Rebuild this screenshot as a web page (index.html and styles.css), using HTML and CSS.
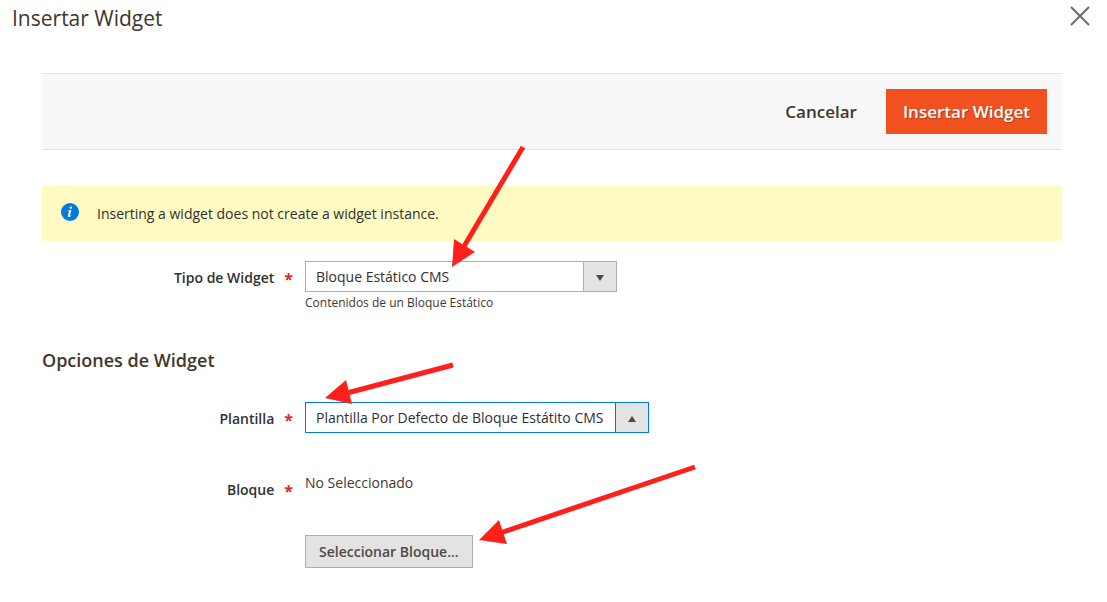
FILE: index.html
```html
<!DOCTYPE html>
<html lang="es">
<head>
<meta charset="utf-8">
<meta name="viewport" content="width=device-width, initial-scale=1">
<title>Insertar Widget</title>
<link rel="stylesheet" href="styles.css">
</head>
<body>
<main class="modal">
  <header class="modal-header">
    <h1 class="modal-title">Insertar Widget</h1>
    <button class="close" type="button" aria-label="Cerrar">
      <svg class="close-icon" viewBox="0 0 20 20" aria-hidden="true"><path d="M1 1 19 19M19 1 1 19"/></svg>
    </button>
  </header>
  <form class="modal-content">
    <div class="toolbar">
      <button class="action" type="button">Cancelar</button>
      <button class="action action-primary" type="button">Insertar Widget</button>
    </div>
    <div class="notice">
      <svg class="notice-icon" viewBox="0 0 18 18" aria-hidden="true">
        <circle cx="9" cy="9" r="9"/>
        <path d="M9 3.8a1.15 1.15 0 1 0 1.6 0 1.15 1.15 0 0 0-1.6 0zM6.9 7.4 10.4 7 9 12.3q-.1.7.8-.1l.5.4q-1.2 1.6-2.6 1.5-1.1-.2-.8-1.6L8 8.3l-1.2-.2z"/>
      </svg>
      <p class="notice-text">Inserting a widget does not create a widget instance.</p>
    </div>
    <div class="field">
      <label class="label" for="type">Tipo de Widget <span class="required">*</span></label>
      <div class="control">
        <div class="select-wrap">
          <select class="select select-type" id="type"><option>Bloque Estático CMS</option></select>
          <svg class="caret" viewBox="0 0 8 6" aria-hidden="true"><path d="M0 0h8L4 6z"/></svg>
        </div>
        <p class="note">Contenidos de un Bloque Estático</p>
      </div>
    </div>
    <h2 class="section-title">Opciones de Widget</h2>
    <div class="field">
      <label class="label" for="template">Plantilla <span class="required">*</span></label>
      <div class="control">
        <div class="select-wrap">
          <select class="select select-template" id="template"><option>Plantilla Por Defecto de Bloque Estátito CMS</option></select>
          <svg class="caret" viewBox="0 0 8 6" aria-hidden="true"><path d="M0 6h8L4 0z"/></svg>
        </div>
      </div>
    </div>
    <div class="field field-block">
      <label class="label" for="chooser">Bloque <span class="required">*</span></label>
      <div class="control">
        <p class="value">No Seleccionado</p>
        <button class="chooser" id="chooser" type="button">Seleccionar Bloque...</button>
      </div>
    </div>
  </form>
  <svg class="arrows" width="1107" height="602" viewBox="0 0 1107 602" aria-hidden="true">
    <path class="shaft" d="M523 147 463 248M453 365 347 393M695 467 500 533"/>
    <path class="head" d="M452 267 454 239 475 252zM325 398 346 380 352 404zM479 540 499 520 507 544z"/>
  </svg>
</main>
</body>
</html>
```
FILE: styles.css
```css
* {
  box-sizing: border-box;
}

body {
  margin: 0;
  background: #fff;
  color: #303030;
  font: 14px/20px "Open Sans", "Noto Sans", sans-serif;
}

h1, h2, p {
  margin: 0;
}

button, select {
  font: inherit;
  border-radius: 0;
}

.modal {
  position: relative;
}

.modal-header {
  display: flex;
  justify-content: space-between;
  align-items: flex-start;
  padding: 4px 17px 0 12px;
}

.modal-title {
  color: #41362f;
  font-size: 21px;
  font-weight: 400;
  line-height: 28px;
}

.close {
  display: flex;
  padding: 2px 0;
  border: 0;
  background: none;
}

.close-icon {
  width: 20px;
  height: 20px;
  fill: none;
  stroke: #736963;
  stroke-width: 2;
}

.modal-content {
  padding: 41px 45px 32px 42px;
}

.toolbar {
  display: flex;
  justify-content: flex-end;
  gap: 12px;
  padding: 15px;
  border: solid #e3e3e3;
  border-width: 1px 0;
  background: #f8f8f8;
}

.action {
  padding: 11px 17px;
  border: 0;
  background: none;
  color: #41362f;
  font-size: 17px;
  font-weight: 600;
  line-height: 23px;
}

.action-primary {
  background: #f1501f;
  color: #fff;
  text-shadow: 1px 1px 0 rgba(0, 0, 0, 0.25);
}

.notice {
  display: flex;
  gap: 18px;
  margin: 36px 0 20px;
  padding: 17px 19px;
  background: #fffac2;
}

.notice-icon {
  width: 18px;
  height: 18px;
  fill: #007bdb;
}

.notice-icon path {
  fill: #fff;
}

.notice-text {
  padding-top: 1px;
}

.field {
  display: grid;
  grid-template-columns: 25% 1fr;
  column-gap: 8px;
}

.label {
  display: flex;
  justify-content: flex-end;
  gap: 10px;
  padding: 7px 4px 0 0;
  font-weight: 600;
}

.required {
  color: #e22626;
  font-size: 16px;
  font-weight: 700;
  line-height: 22px;
}

.select-wrap {
  position: relative;
  display: flex;
  width: fit-content;
}

.select {
  height: 31px;
  padding: 0 44px 0 10px;
  border: 1px solid #adadad;
  appearance: none;
  color: #303030;
  background: linear-gradient(to right, #adadad 1px, #e3e3e3 1px) right / 33px 100% no-repeat #fff;
}

.select-type {
  width: 312px;
}

.select-template {
  width: 344px;
  border-color: #007bdb;
  background-image: linear-gradient(to right, #007bdb 1px, #e3e3e3 1px);
}

.caret {
  position: absolute;
  top: 14px;
  right: 13px;
  width: 8px;
  height: 6px;
  fill: #514943;
  pointer-events: none;
}

.note {
  padding-top: 1px;
  color: #41362f;
  font-size: 12px;
}

.section-title {
  margin: 35px 0 30px;
  color: #41362f;
  font-size: 18px;
  font-weight: 600;
  line-height: 24px;
}

.field-block {
  margin-top: 40px;
}

.value {
  color: #41362f;
}

.chooser {
  margin-top: 42px;
  padding: 6px 13px;
  border: 1px solid #adadad;
  background: #e3e3e3;
  color: #514943;
  font-weight: 600;
  line-height: 19px;
}

.arrows {
  position: absolute;
  top: 0;
  left: 0;
  pointer-events: none;
}

.shaft {
  fill: none;
  stroke: #ff201c;
  stroke-width: 5;
}

.head {
  fill: #ff201c;
}
```
